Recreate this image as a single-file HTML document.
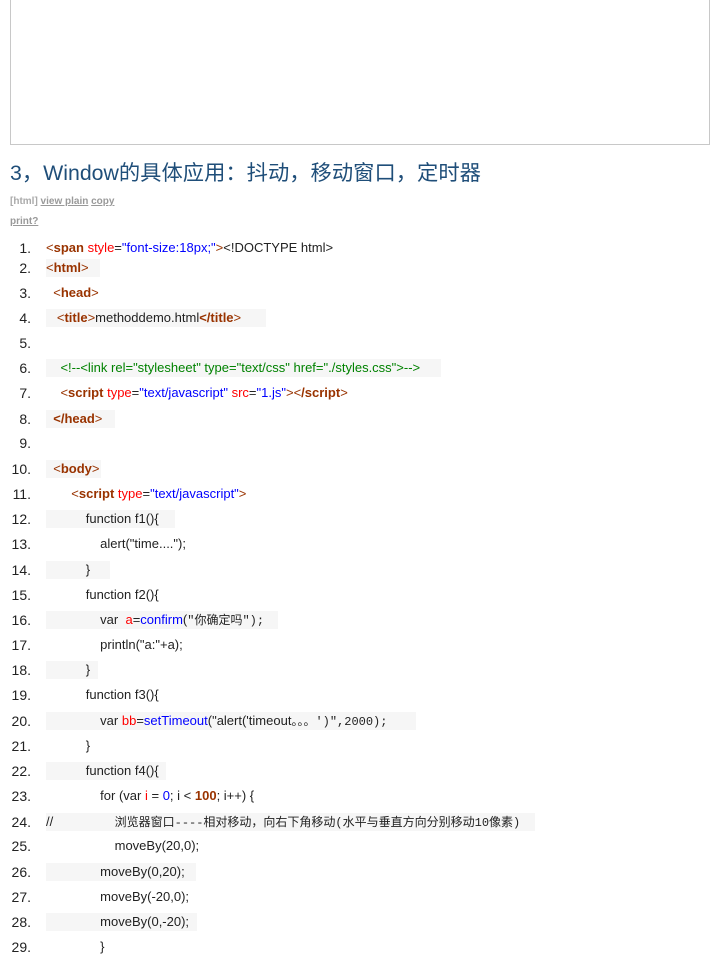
<!DOCTYPE html>
<html><head><meta charset="utf-8"><style>
body{margin:0;width:712px;height:960px;background:#fff;position:relative;overflow:hidden;font-family:"Liberation Sans","Noto Sans CJK SC",sans-serif;}
.box{position:absolute;left:10px;top:-2px;width:698px;height:145px;border:1px solid #c8c8c8;}
h3{position:absolute;left:10px;top:156px;margin:0;font-size:21.3px;font-weight:normal;color:#1f4e79;}
.tb{position:absolute;left:10px;font-size:10px;font-weight:bold;color:#aaa;}
.tb u{color:#999}
.n{position:absolute;left:0;width:31px;text-align:right;font-size:14px;color:#222;}
.l{position:absolute;left:46px;font-size:13px;color:#222;white-space:pre;height:18px;line-height:18px;}
.g{background:#f6f6f6}
.t{color:#993300;font-weight:bold}.p{color:#993300}.a{color:#f00}.v{color:#00f}.c{color:#008200}
.m{font-family:"Liberation Mono","Noto Sans CJK SC",monospace;font-size:12px}
</style></head><body>
<div class="box"></div>
<h3>3，Window的具体应用：抖动，移动窗口，定时器</h3>
<div class="tb" style="top:196px">[html] <u>view plain</u> <u>copy</u></div>
<div class="tb" style="top:216px"><u>print?</u></div>

<div class="n" style="top:240px">1.</div><div class="l" style="top:239px"><span class="p">&lt;</span><span class="t">span</span> <span class="a">style</span>=<span class="v">"font-size:18px;"</span><span class="p">&gt;</span>&lt;!DOCTYPE html&gt;</div>
<div class="n" style="top:260px">2.</div><div class="l g" style="top:259px;width:54px"><span class="p">&lt;</span><span class="t">html</span><span class="p">&gt;</span></div>
<div class="n" style="top:285px">3.</div><div class="l" style="top:284px">  <span class="p">&lt;</span><span class="t">head</span><span class="p">&gt;</span></div>
<div class="n" style="top:310px">4.</div><div class="l g" style="top:309px;width:220px">   <span class="p">&lt;</span><span class="t">title</span><span class="p">&gt;</span>methoddemo.html<span class="t">&lt;/title</span><span class="p">&gt;</span></div>
<div class="n" style="top:335px">5.</div>
<div class="n" style="top:360px">6.</div><div class="l g" style="top:359px;width:395px">    <span class="c">&lt;!--&lt;link rel="stylesheet" type="text/css" href="./styles.css"&gt;--&gt;</span></div>
<div class="n" style="top:385px">7.</div><div class="l" style="top:384px">    <span class="p">&lt;</span><span class="t">script</span> <span class="a">type</span>=<span class="v">"text/javascript"</span> <span class="a">src</span>=<span class="v">"1.js"</span><span class="p">&gt;</span><span class="p">&lt;</span><span class="t">/script</span><span class="p">&gt;</span></div>
<div class="n" style="top:411px">8.</div><div class="l g" style="top:410px;width:69px">  <span class="t">&lt;/head</span><span class="p">&gt;</span></div>
<div class="n" style="top:435px">9.</div>
<div class="n" style="top:461px">10.</div><div class="l g" style="top:460px;width:55px">  <span class="p">&lt;</span><span class="t">body</span><span class="p">&gt;</span></div>
<div class="n" style="top:486px">11.</div><div class="l" style="top:485px">       <span class="p">&lt;</span><span class="t">script</span> <span class="a">type</span>=<span class="v">"text/javascript"</span><span class="p">&gt;</span></div>
<div class="n" style="top:511px">12.</div><div class="l g" style="top:510px;width:129px">           function f1(){</div>
<div class="n" style="top:536px">13.</div><div class="l" style="top:535px">               alert("time....");</div>
<div class="n" style="top:562px">14.</div><div class="l g" style="top:561px;width:64px">           }</div>
<div class="n" style="top:587px">15.</div><div class="l" style="top:586px">           function f2(){</div>
<div class="n" style="top:612px">16.</div><div class="l g" style="top:611px;width:232px">               var  <span class="a">a</span>=<span class="v">confirm</span>(<span class="m">"你确定吗");</span></div>
<div class="n" style="top:637px">17.</div><div class="l" style="top:636px">               println("a:"+a);</div>
<div class="n" style="top:662px">18.</div><div class="l g" style="top:661px;width:52px">           }</div>
<div class="n" style="top:687px">19.</div><div class="l" style="top:686px">           function f3(){</div>
<div class="n" style="top:713px">20.</div><div class="l g" style="top:712px;width:370px">               var <span class="a">bb</span>=<span class="v">setTimeout</span>("alert('timeout<span class="m">。。。')",2000);</span></div>
<div class="n" style="top:738px">21.</div><div class="l" style="top:737px">           }</div>
<div class="n" style="top:763px">22.</div><div class="l g" style="top:762px;width:120px">           function f4(){</div>
<div class="n" style="top:788px">23.</div><div class="l" style="top:787px">               for (var <span class="a">i</span> = <span class="v">0</span>; i &lt; <span class="t">100</span>; i++) {</div>
<div class="n" style="top:814px">24.</div><div class="l g" style="top:813px;width:489px">//                 <span class="m">浏览器窗口----相对移动，向右下角移动(水平与垂直方向分别移动10像素)</span></div>
<div class="n" style="top:838px">25.</div><div class="l" style="top:837px">                   moveBy(20,0);</div>
<div class="n" style="top:864px">26.</div><div class="l g" style="top:863px;width:150px">               moveBy(0,20);</div>
<div class="n" style="top:889px">27.</div><div class="l" style="top:888px">               moveBy(-20,0);</div>
<div class="n" style="top:914px">28.</div><div class="l g" style="top:913px;width:151px">               moveBy(0,-20);</div>
<div class="n" style="top:939px">29.</div><div class="l" style="top:938px">               }</div>
</body></html>
